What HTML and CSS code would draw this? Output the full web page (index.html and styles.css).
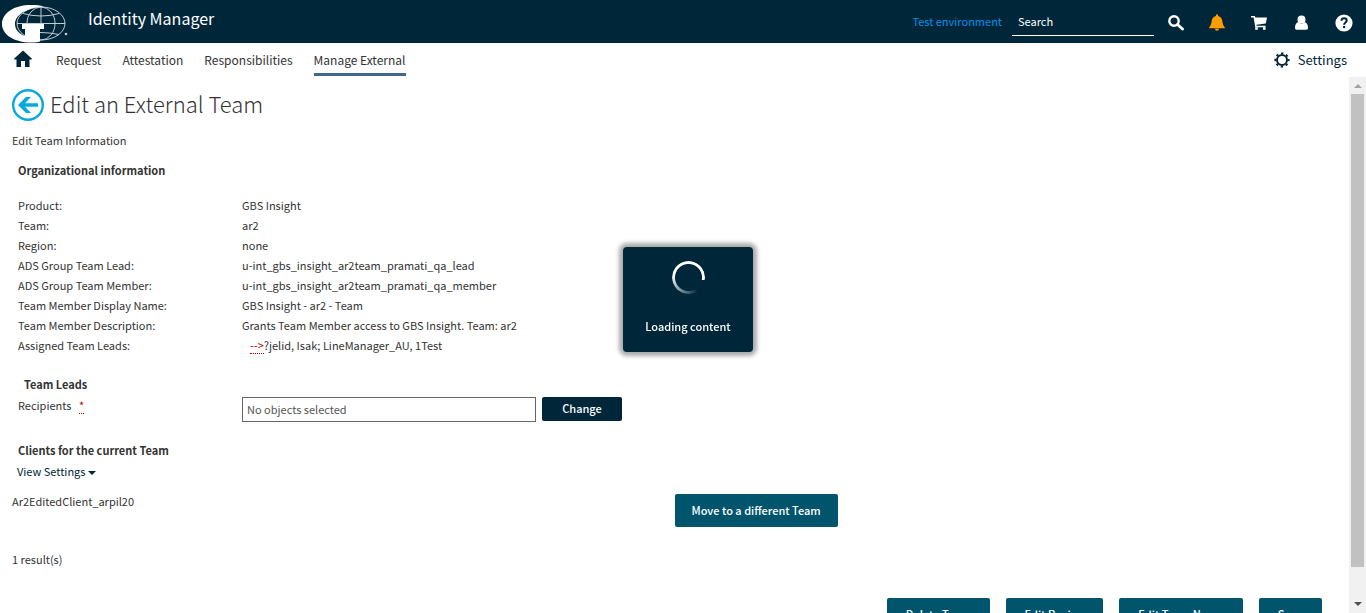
FILE: index.html
```html
<!DOCTYPE html>
<html lang="en">
<head>
<meta charset="utf-8">
<meta name="viewport" content="width=device-width, initial-scale=1">
<title>Identity Manager</title>
<link rel="stylesheet" href="styles.css">
</head>
<body>
<header class="topbar">
  <a class="logo" href="#" aria-label="Start page">
    <svg width="68" height="38" viewBox="0 0 68 38" aria-hidden="true">
      <g fill="none" stroke="#c3cdd4" stroke-width="1">
        <ellipse cx="41" cy="18.500" rx="24" ry="16.500"/>
        <ellipse cx="41" cy="18.500" rx="14" ry="16.500"/>
        <path d="M41 2v18M17 18.500h48M23 8.500q18 5 36 0M40 27.500q10 0 19 2"/>
      </g>
      <path fill="#fff" d="M44 1.500C40 .3 36 0 31 0 14 0 2 8 2 19c0 10.500 12 18.500 29 18.500 4 0 7-.3 9-1V24h4v-5H22v5h3v7c-6-2-10-6.500-10-12C15 10 27 2 44 1.500z"/>
      <circle cx="66" cy="29" r="1.300" fill="#c3cdd4"/>
    </svg>
  </a>
  <h1 class="app-name">Identity Manager</h1>
  <span class="environment">Test environment</span>
  <input class="search" type="text" placeholder="Search" aria-label="Search">
  <div class="tools">
    <button class="tool" aria-label="Search">
      <svg width="18" height="18" viewBox="0 0 18 18"><circle cx="7" cy="7" r="4.700" fill="none" stroke="#fff" stroke-width="2.400"/><path d="M10.500 10.500L15.500 15" stroke="#fff" stroke-width="3" stroke-linecap="round"/></svg>
    </button>
    <button class="tool" aria-label="Notifications">
      <svg width="18" height="18" viewBox="0 0 18 18"><path fill="#ff9d00" d="M7 2V1.200a1 1 0 0 1 2 0V2c2.900.6 3.900 2.600 4.300 5 .6 3.800 1.100 4.800 2.500 6.200v1.100H.2v-1.100C1.600 11.800 2.100 10.800 2.700 7 3.100 4.600 4.100 2.600 7 2zM6 14.800h4a2 2 0 0 1-4 0z"/></svg>
    </button>
    <button class="tool" aria-label="Shopping cart">
      <svg width="18" height="18" viewBox="0 0 18 18"><path fill="#fff" d="M0 2h3.800l.6 1.500H16L14.800 9.500 5.400 10.800l.2.900h9v1.600H4.300L2.600 3.500H0z"/><path fill="#fff" d="M4.200 13.200h2.600v2.600H4.200zM12 13.200h2.600v2.600H12z"/></svg>
    </button>
    <button class="tool" aria-label="Profile">
      <svg width="18" height="18" viewBox="0 0 18 18"><circle cx="8.500" cy="5.500" r="4" fill="#fff"/><path fill="#fff" d="M2 14c0-3.500 1.200-5.500 3.300-6 2 2 4.400 2 6.400 0C13.800 8.500 15 10.500 15 14c0 1-.7 1.700-1.600 1.700H3.600C2.700 15.700 2 15 2 14z"/></svg>
    </button>
    <button class="tool" aria-label="Help">
      <svg width="18" height="18" viewBox="0 0 18 18"><circle cx="9" cy="9" r="8.600" fill="#fff"/><path d="M6.500 6.800c0-3.400 5.200-3.100 5.200-.3 0 2-2.600 1.900-2.600 4.300" fill="none" stroke="#00263a" stroke-width="2"/><circle cx="9.100" cy="13" r="1.200" fill="#00263a"/></svg>
    </button>
  </div>
</header>

<nav class="menu" aria-label="Main">
  <a class="home" href="#" aria-label="Home">
    <svg width="18" height="18" viewBox="0 0 18 18"><path fill="#00263a" d="M9 .5l9 8.200-.4.800H15.500V17H11v-6H7v6H2.500V9.500H.4L0 8.700z"/></svg>
  </a>
  <a class="menu-item" href="#">Request</a>
  <a class="menu-item" href="#">Attestation</a>
  <a class="menu-item" href="#">Responsibilities</a>
  <a class="menu-item menu-item-active" href="#" aria-current="page">Manage External</a>
  <a class="settings" href="#">
    <svg width="16" height="16" viewBox="0 0 16 16"><circle cx="8" cy="8" r="5" fill="none" stroke="#00263a" stroke-width="2"/><circle cx="8" cy="8" r="6.700" fill="none" stroke="#00263a" stroke-width="1.800" stroke-dasharray="2.400 2.862" stroke-dashoffset="1.200"/></svg>
    Settings
  </a>
</nav>

<div class="viewport">
  <main class="content">
    <div class="title-row">
      <a class="back" href="#" aria-label="Back">
        <svg width="32" height="32" viewBox="0 0 32 32"><circle cx="16" cy="16" r="14.800" fill="none" stroke="#06a9dc" stroke-width="2.400"/><path fill="#06a9dc" d="M6 16l8-8h5l-6 6.200h13v3.600H13L19 24h-5z"/></svg>
      </a>
      <h2 class="title">Edit an External Team</h2>
    </div>
    <p class="intro">Edit Team Information</p>

    <section class="organization">
      <h3 class="section-title">Organizational information</h3>
      <dl class="facts">
        <dt>Product:</dt><dd>GBS Insight</dd>
        <dt>Team:</dt><dd>ar2</dd>
        <dt>Region:</dt><dd>none</dd>
        <dt>ADS Group Team Lead:</dt><dd>u-int_gbs_insight_ar2team_pramati_qa_lead</dd>
        <dt>ADS Group Team Member:</dt><dd>u-int_gbs_insight_ar2team_pramati_qa_member</dd>
        <dt>Team Member Display Name:</dt><dd>GBS Insight - ar2 - Team</dd>
        <dt>Team Member Description:</dt><dd>Grants Team Member access to GBS Insight. Team: ar2</dd>
        <dt>Assigned Team Leads:</dt><dd class="leads"><abbr class="mark" title="Invalid entry">--&gt;</abbr>?jelid, Isak; LineManager_AU, 1Test</dd>
      </dl>
    </section>

    <section class="team-leads">
      <h3 class="section-title section-title-nested">Team Leads</h3>
      <div class="field">
        <label class="field-label" for="recipients">Recipients <abbr class="mark required" title="Required">*</abbr></label>
        <input class="field-input" id="recipients" type="text" value="No objects selected" readonly>
        <button class="button button-dark">Change</button>
      </div>
    </section>

    <section class="clients">
      <h3 class="section-title">Clients for the current Team</h3>
      <button class="view-settings">View Settings <span class="caret"></span></button>
      <div class="client-row">
        <span>Ar2EditedClient_arpil20</span>
        <div><button class="button button-row">Move to a different Team</button></div>
      </div>
      <p class="results">1 result(s)</p>
    </section>

    <div class="actions">
      <button class="button">Delete Team</button>
      <button class="button">Edit Region</button>
      <button class="button">Edit Team Name</button>
      <button class="button">Save</button>
    </div>
  </main>
  <div class="scrollbar" aria-hidden="true">
    <span class="arrow arrow-up"></span>
    <span class="thumb"></span>
    <span class="arrow arrow-down"></span>
  </div>
</div>

<div class="loading" role="status">
  <span class="spinner"></span>
  <span>Loading content</span>
</div>
</body>
</html>
```
FILE: styles.css
```css
* {
  box-sizing: border-box;
}

body {
  display: flex;
  flex-direction: column;
  height: 100vh;
  margin: 0;
  overflow: hidden;
  background: #fff;
  color: #333;
  font: 11px/20px "Noto Sans CJK SC", "Open Sans", sans-serif;
}

h1, h2, h3, p, dl, dd {
  margin: 0;
}

a {
  color: inherit;
  text-decoration: none;
}

button, input {
  font: inherit;
}

button {
  padding: 0;
  border: 0;
  background: none;
  color: inherit;
}

svg {
  display: block;
}

.topbar {
  display: flex;
  flex: none;
  align-items: center;
  height: 43px;
  padding-right: 13px;
  background: #00263a;
  color: #fff;
}

.logo {
  padding-top: 4px;
}

.app-name {
  flex: 1;
  padding: 0 0 8px 20px;
  font-size: 16px;
  font-weight: 400;
}

.environment {
  padding-bottom: 2px;
  color: #0a8fe8;
}

.search {
  width: 142px;
  height: 28px;
  margin: 0 13px 0 10px;
  padding: 0 6px;
  border: 0;
  border-bottom: 1px solid #fff;
  background: none;
  color: #fff;
}

.search::placeholder {
  color: #fff;
  opacity: 1;
}

.tools {
  display: flex;
  gap: 24px;
  padding-top: 3px;
}

.menu {
  display: flex;
  flex: none;
  gap: 21px;
  height: 34px;
  padding: 7px 19px 0 14px;
  font-size: 12px;
}

.home {
  margin-right: 3px;
}

.menu-item {
  height: 26px;
  line-height: 20px;
}

.menu-item-active {
  border-bottom: 3px solid #41698a;
}

.settings {
  display: flex;
  gap: 8px;
  height: 20px;
  margin-left: auto;
  align-items: center;
  color: #00263a;
  font-size: 13px;
}

.viewport {
  display: flex;
  flex: 1;
  min-height: 0;
}

.content {
  flex: 1;
  overflow: hidden;
  padding: 12px 12px 0;
}

.title-row {
  display: flex;
  gap: 6px;
  align-items: flex-start;
}

.title {
  font-size: 22px;
  font-weight: 300;
  line-height: 28px;
}

.intro {
  margin-top: 9px;
}

.organization {
  margin-top: 10px;
  padding-left: 6px;
}

.section-title {
  font-size: 11px;
  font-weight: 700;
}

.facts {
  display: grid;
  grid-template-columns: 224px 1fr;
  margin-top: 15px;
}

.leads {
  padding-left: 8px;
}

.mark {
  border-bottom: 1px dotted #b30000;
  color: #b30000;
  text-decoration: none;
}

.team-leads {
  margin-top: 19px;
  padding-left: 6px;
}

.section-title-nested {
  padding-left: 6px;
}

.field {
  display: flex;
  align-items: flex-start;
  padding-top: 3px;
}

.field-label {
  width: 224px;
  margin-top: -2px;
}

.required {
  margin-left: 5px;
}

.field-input {
  width: 294px;
  height: 25px;
  margin-right: 6px;
  padding: 0 4px 2px;
  border: 1px solid #666;
  color: #555;
}

.button {
  height: 33px;
  padding: 0 19px 2px;
  border-radius: 2px;
  background: #00546b;
  color: #fff;
  font-weight: 500;
}

.button-dark {
  width: 80px;
  height: 24px;
  background: #00263a;
}

.button-row {
  padding: 0 17px 2px;
}

.clients {
  margin-top: 18px;
}

.clients .section-title {
  padding-left: 6px;
}

.view-settings {
  display: flex;
  gap: 3px;
  align-items: center;
  margin: 1px 0 0 5px;
  color: #00263a;
}

.caret {
  margin-top: 4px;
  border: 4px solid transparent;
  border-top-color: #00263a;
  border-bottom: 0;
}

.client-row {
  display: grid;
  grid-template-columns: 1fr 1fr;
  margin-top: 13px;
  line-height: 14px;
}

.results {
  margin-top: 22px;
}

.actions {
  display: flex;
  gap: 16px;
  justify-content: flex-end;
  margin-top: 29px;
  padding-right: 15px;
}

.scrollbar {
  display: flex;
  flex: none;
  flex-direction: column;
  align-items: center;
  width: 17px;
  background: #f1f1f1;
}

.thumb {
  flex: 473;
  width: 13px;
  background: #c1c1c1;
}

.arrow {
  border: 4px solid transparent;
}

.arrow-up {
  margin: 7px 0 6px;
  border-top: 0;
  border-bottom-color: #a3a3a3;
}

.arrow-down {
  margin: 35px 0 7px;
  border-top-color: #505050;
  border-bottom: 0;
}

.loading {
  position: fixed;
  top: calc(50% - 60px);
  left: calc(50% - 60px);
  display: flex;
  flex-direction: column;
  gap: 22px;
  align-items: center;
  width: 130px;
  padding: 14px 0 16px;
  border-radius: 4px;
  background: #00263a;
  box-shadow: 0 0 4px 4px #aaa;
  color: #fff;
  font-weight: 500;
}

.spinner {
  width: 33px;
  height: 33px;
  border-radius: 50%;
  background: conic-gradient(from 100deg, transparent 0 12%, #fff 50%);
  -webkit-mask: radial-gradient(circle, transparent 13px, #000 14px);
  mask: radial-gradient(circle, transparent 13px, #000 14px);
}
```
